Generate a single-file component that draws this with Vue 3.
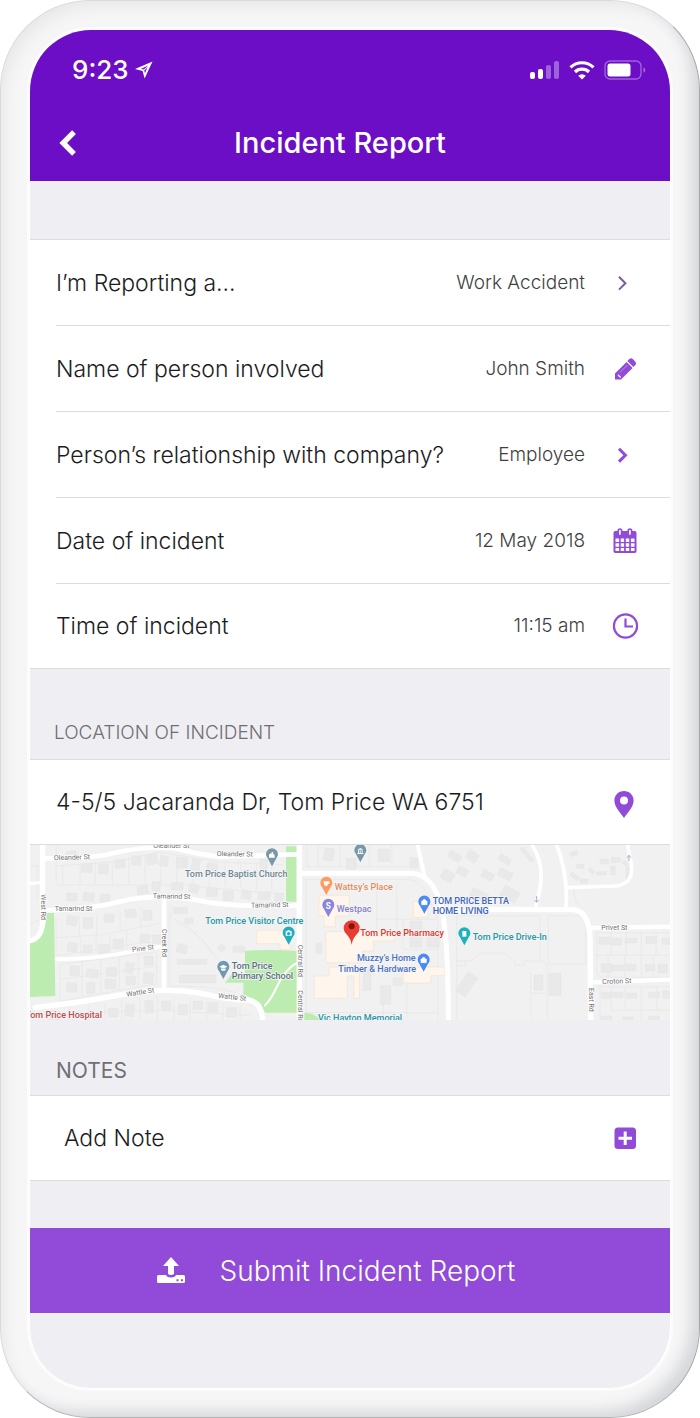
<template>
  <div class="phone">
    <main class="screen">
      <header class="top-bar">
        <div class="status-bar">
          <div class="status-time">
            <span>9:23</span>
            <svg class="location-arrow" viewBox="0 0 18 18" fill="currentColor" fill-rule="evenodd">
              <path d="M17.500.5L0 8l7.600 1.900L9.600 17.500zM13.200 4.600L5.800 7.900l3.200.6 1 3.800z"/>
              <path d="M16 2l.4.400L9.400 9.400 8.600 8.800z"/>
            </svg>
          </div>
          <div class="status-icons">
            <svg class="signal" viewBox="0 0 30 20" fill="currentColor">
              <rect x="0" y="12" width="5" height="7" rx="2"/>
              <rect x="8" y="9" width="5" height="10" rx="2"/>
              <rect x="16" y="5" width="5" height="14" rx="2" opacity="0.35"/>
              <rect x="24" y="1" width="5" height="18" rx="2" opacity="0.35"/>
            </svg>
            <svg class="wifi" viewBox="0 0 26 20" fill="none" stroke="currentColor" stroke-width="3.2">
              <path d="M1.5 7.4a16.5 16.5 0 0 1 23 0"/>
              <path d="M6 12a10 10 0 0 1 14 0"/>
              <path d="M13 19.5l-3.8-3.8a5.4 5.4 0 0 1 7.6 0z" fill="currentColor" stroke="none"/>
            </svg>
            <svg class="battery" viewBox="0 0 42 20" fill="none">
              <rect x="1" y="1" width="36" height="18" rx="5" stroke="currentColor" stroke-opacity="0.35" stroke-width="1.4"/>
              <rect x="3.5" y="3.5" width="23" height="13" rx="2.5" fill="currentColor"/>
              <path d="M39.5 7.5q1.8.8 1.8 2.5t-1.8 2.5z" fill="currentColor" opacity="0.4"/>
            </svg>
          </div>
        </div>
        <div class="nav-bar">
          <button class="back-button" type="button" aria-label="Back">
            <svg viewBox="0 0 18 26" fill="none" stroke="currentColor" stroke-width="5.4">
              <path d="M15 2.2L4.2 13 15 23.8"/>
            </svg>
          </button>
          <h1 class="nav-title">Incident Report</h1>
        </div>
      </header>

      <form class="report" @submit.prevent>
        <section class="group details">
          <div v-for="field in fields" :key="field.id" class="row">
            <div class="row-inner">
              <label class="row-label" :for="field.id">{{ field.label }}</label>
              <select v-if="field.options" :id="field.id" v-model="field.value" class="row-value">
                <option v-for="option in field.options" :key="option">{{ option }}</option>
              </select>
              <input v-else :id="field.id" v-model="field.value" class="row-value" type="text">
              <svg v-if="field.icon === 'chevron'" class="row-icon" :class="{ muted: field.muted }" viewBox="0 0 32 32" fill="none" stroke="currentColor" :stroke-width="field.muted ? 2 : 3">
                <path d="M11 9.800l6.400 6.400-6.400 6.400"/>
              </svg>
              <svg v-else-if="field.icon === 'pencil'" class="row-icon" viewBox="0 0 32 32" fill="currentColor">
                <path d="M7 26.500v-6L18.600 8.900l6 6L13 26.500z"/>
                <path d="M19.400 8.100l2-2q1.700-1.500 3.400 0l2.600 2.600q1.500 1.700 0 3.400l-2 2z"/>
                <path d="M9.800 22l1 .3.400 1 1 .4.300 1" fill="none" stroke="#fff" stroke-width="1.200"/>
                <path d="M12 19.500l7.500-7.500" stroke="#fff" stroke-opacity="0.35" stroke-width="1"/>
              </svg>
              <svg v-else-if="field.icon === 'calendar'" class="row-icon" viewBox="0 0 32 32">
                <rect x="5.500" y="6" width="23" height="22" rx="1.8" fill="currentColor"/>
                <path d="M7.500 13.500h3.600v3.400H7.500zM12.700 13.500h3.400v3.400h-3.400zM17.800 13.500h3.400v3.400h-3.400zM22.900 13.500h3.600v3.400h-3.600zM7.500 18.300h3.600v3.400H7.500zM12.700 18.300h3.400v3.400h-3.400zM17.800 18.300h3.400v3.400h-3.400zM22.900 18.300h3.600v3.400h-3.600zM7.500 23.100h3.600v3H7.500zM12.700 23.100h3.400v3h-3.400zM17.800 23.100h3.400v3h-3.400zM22.900 23.100h3.600v3h-3.600z" fill="#fff"/>
                <rect x="10.200" y="4" width="3.400" height="6.600" rx="1.700" fill="#fff" stroke="currentColor" stroke-width="1.700"/>
                <rect x="20.200" y="4" width="3.400" height="6.600" rx="1.700" fill="#fff" stroke="currentColor" stroke-width="1.700"/>
              </svg>
              <svg v-else class="row-icon" viewBox="0 0 32 32" fill="none" stroke="currentColor" stroke-width="2.2">
                <circle cx="17.500" cy="16" r="11.600"/>
                <path d="M17.500 8.500v8h7.500"/>
              </svg>
            </div>
          </div>
        </section>

        <div class="section-head location-head">
          <label for="address">LOCATION OF INCIDENT</label>
        </div>
        <section class="group">
          <div class="row single">
            <div class="row-inner">
              <input id="address" v-model="address" class="address" type="text">
              <svg class="row-icon" viewBox="0 0 32 32" fill="currentColor" fill-rule="evenodd">
                <path d="M16 5c-5.500 0-9.600 4.200-9.600 9.500C6.400 21 12 26 16 32c4-6 9.600-11 9.600-17.500C25.600 9.200 21.500 5 16 5zM16 10.600a4 4 0 1 1 0 8 4 4 0 0 1 0-8z"/>
              </svg>
            </div>
          </div>
          <svg class="map" viewBox="0 12 1920 525" preserveAspectRatio="xMidYMid slice" role="img" aria-label="Map">
            <rect y="12" width="1920" height="525" fill="#f1f1f1"/>
            <g class="green">
              <path d="M50 215h22l4 250-76 3V300q40-10 48-60z"/>
              <path d="M768 16h32v166h-32z"/>
              <path d="M645 330q60-6 158 0v185h-98l-15-30q-30-15-50-25V425h-55l20-25h40z"/>
              <path d="M823 515q30 0 50 24h-50z"/>
            </g>
            <g class="lots">
              <path v-for="lot in lots" :key="lot" :d="lot"/>
            </g>
            <g class="buildings">
              <path v-for="(b, i) in buildings" :key="i" :d="boxPath(b)"/>
            </g>
            <g class="shops">
              <path d="M680 268h102v58h-32v-18h-70z"/>
              <path d="M868 163h90v62h-42v32h-34v-32h-16z"/>
              <path d="M888 272h206v28h-64v30h-32v35H888z"/>
              <path d="M853 405h45v-27h90v94h-16v-67h-20v67h-99z"/>
              <path d="M1150 182h44v47h-44zM1121 378h124v26h-42v22h-82z"/>
            </g>
            <g class="roads">
              <path d="M38 12v190q8 90-38 97" stroke-width="16"/>
              <path d="M38 52q120 0 190-10 110-30 210-20 60 18 130 25l232-7" stroke-width="14"/>
              <path d="M0 128l32-4" stroke-width="10"/>
              <path d="M44 208q130 0 250-32 110-20 240 8 90 14 276 10" stroke-width="14"/>
              <path d="M402 180v270" stroke-width="14"/>
              <path d="M80 355q120 0 240-26 50-10 82-12" stroke-width="12"/>
              <path d="M15 499q130-12 260-38 130-24 240-4 80 20 140 20 40 6 43 62" stroke-width="16"/>
              <path d="M808 12v526" stroke-width="16"/>
              <path d="M815 97h330q50 5 75 60 35 60 35 380" stroke-width="15"/>
              <path d="M1163 12l22 100" stroke-width="12"/>
              <path d="M1260 214q120-12 260-8h110q45 4 50 80l2 251" stroke-width="16"/>
              <path d="M1506 12q40 60 22 140l-12 52M1580 12q35 90 28 190M1610 140l145-5q60-5 48-70l-10-53" stroke-width="11"/>
              <path d="M1680 261l240-4M1680 424l240-8" stroke-width="13"/>
              <path d="M705 493q20-20 35-55 30-60 62-72" stroke-width="6"/>
            </g>
            <g class="street-names">
              <text v-for="s in streets" :key="s.name + s.x + s.y" :transform="`translate(${s.x} ${s.y}) rotate(${s.turn})`">{{ s.name }}</text>
            </g>
            <g v-for="pin in pins" :key="pin.x" :transform="`translate(${pin.x} ${pin.y})`">
              <path d="M0 34L-13 10a18 18 0 1 1 26 0z" :fill="pin.color"/>
              <path v-if="pin.kind === 'bag'" d="M-8-4H8V7H-8zM-4-4q0-5 4-5t4 5" fill="#fff" stroke="#fff" stroke-width="2"/>
              <path v-else-if="pin.kind === 'cup'" d="M-9-7H9v8H4v4q-4 4-10 0z" fill="#fff"/>
              <path v-else-if="pin.kind === 'school'" d="M0-9l12 6L0 3l-12-6zM-7 2v5q7 5 14 0V2L0 5z" fill="#fff"/>
              <path v-else-if="pin.kind === 'camera'" d="M-9-6h4l2-3h6l2 3h4V7H-9zM0-4a5 5 0 1 0 .1 0" fill="#fff" fill-rule="evenodd"/>
              <path v-else-if="pin.kind === 'church'" d="M-9 8v-9l4-4 3 3v-5l3-3 3 3v4l4 4v7z" fill="#fff"/>
              <path v-else-if="pin.kind === 'civic'" d="M-9-4L0-9l9 5zM-7-2h3v7h-3zM-2-2h3v7h-3zM4-2h3v7H4zM-9 6H9v3H-9z" fill="#fff"/>
              <path v-else-if="pin.kind === 'film'" d="M-6-9H6V8H-6z" fill="#fff"/>
              <text v-else class="dollar" y="9">S</text>
            </g>
            <path d="M965 312q-2-18-14-31a24 24 0 1 1 28 0q-12 13-14 31z" fill="#e53e32"/>
            <circle cx="965" cy="256" r="9" fill="#8c1007"/>
            <path class="arrows" d="M1520 165v18m-6-6l6 7 6-7M1797 60V43m-6 7l6-7 6 7"/>
            <g class="places">
              <text v-for="p in places" :key="p.name" :x="p.x" :y="p.y" :fill="p.color">{{ p.name }}</text>
            </g>
          </svg>
        </section>

        <div class="section-head notes-head">
          <h2>NOTES</h2>
        </div>
        <section class="group">
          <button class="row single note-button" type="button">
            <span>Add Note</span>
            <svg class="row-icon" viewBox="0 0 32 32">
              <rect x="6.500" y="5.500" width="21.500" height="21.500" rx="3.500" fill="currentColor"/>
              <path d="M17.200 9.500v13.500M10.500 16.200h13.500" stroke="#fff" stroke-width="3"/>
            </svg>
          </button>
        </section>

        <button class="submit-button" type="submit">
          <svg viewBox="0 0 28 28" fill="currentColor">
            <path d="M14 0l8 9h-5v8q-3 2-6 0V9H6z"/>
            <path fill-rule="evenodd" d="M1.500 18H9q1 2.500 5 2.500t5-2.500h7.500q1.500 0 1.500 1.500v5q0 1.500-1.500 1.500h-25Q0 26 0 24.500v-5Q0 18 1.500 18zM19.500 22.300v2h2v-2zM24 22.300v2h2v-2z"/>
          </svg>
          <span>Submit Incident Report</span>
        </button>
      </form>
    </main>
  </div>
</template>

<script setup>
import { ref } from 'vue'

const fields = ref([
  { id: 'type', label: 'I’m Reporting a...', value: 'Work Accident', options: ['Work Accident'], icon: 'chevron', muted: true },
  { id: 'person', label: 'Name of person involved', value: 'John Smith', icon: 'pencil' },
  { id: 'relationship', label: 'Person’s relationship with company?', value: 'Employee', options: ['Employee'], icon: 'chevron' },
  { id: 'date', label: 'Date of incident', value: '12 May 2018', icon: 'calendar' },
  { id: 'time', label: 'Time of incident', value: '11:15 am', icon: 'clock' }
])

const address = ref('4-5/5 Jacaranda Dr, Tom Price WA 6751')

const streets = [
  { name: 'Oleander St', x: 72, y: 58, turn: -2 },
  { name: 'Oleander St', x: 370, y: 22, turn: 0 },
  { name: 'Oleander St', x: 560, y: 45, turn: 1 },
  { name: 'Tamarind St', x: 74, y: 211, turn: 0 },
  { name: 'Tamarind St', x: 368, y: 172, turn: 1 },
  { name: 'Tamarind St', x: 663, y: 200, turn: -1 },
  { name: 'Pine St', x: 307, y: 333, turn: -7 },
  { name: 'Wattle St', x: 290, y: 467, turn: -9 },
  { name: 'Wattle St', x: 564, y: 470, turn: 7 },
  { name: 'West Rd', x: 32, y: 160, turn: 90 },
  { name: 'Creek Rd', x: 396, y: 264, turn: 90 },
  { name: 'Central Rd', x: 805, y: 311, turn: 90 },
  { name: 'Central Rd', x: 805, y: 448, turn: 90 },
  { name: 'Privet St', x: 1714, y: 267, turn: 0 },
  { name: 'Croton St', x: 1717, y: 429, turn: -2 },
  { name: 'East Rd', x: 1676, y: 441, turn: 90 }
]

const places = [
  { name: 'Tom Price Baptist Church', x: 465, y: 107, color: '#6f8794' },
  { name: 'Tom Price Visitor Centre', x: 526, y: 250, color: '#2497a5' },
  { name: 'Tom Price', x: 605, y: 383, color: '#56707e' },
  { name: 'Primary School', x: 605, y: 413, color: '#56707e' },
  { name: 'Tom Price Hospital', x: -14, y: 532, color: '#bc4b4f' },
  { name: 'Wattsy’s Place', x: 914, y: 147, color: '#df8d5f' },
  { name: 'Westpac', x: 920, y: 213, color: '#8583c4' },
  { name: 'Tom Price Pharmacy', x: 991, y: 285, color: '#dc352e' },
  { name: 'Muzzy’s Home', x: 981, y: 361, color: '#4a70c4' },
  { name: 'Timber & Hardware', x: 925, y: 392, color: '#4a70c4' },
  { name: 'TOM PRICE BETTA', x: 1208, y: 188, color: '#3e68ba' },
  { name: 'HOME LIVING', x: 1208, y: 218, color: '#3e68ba' },
  { name: 'Tom Price Drive-In', x: 1328, y: 298, color: '#2497a5' },
  { name: 'Vic Hayton Memorial', x: 864, y: 539, color: '#2497a5' }
]

const pins = [
  { x: 726, y: 42, kind: 'church', color: '#7898a8' },
  { x: 991, y: 30, kind: 'civic', color: '#7898a8' },
  { x: 580, y: 380, kind: 'school', color: '#7098b0' },
  { x: 776, y: 277, kind: 'camera', color: '#1fb0c0' },
  { x: 889, y: 128, kind: 'cup', color: '#ff9a5c' },
  { x: 895, y: 194, kind: 'dollar', color: '#8984dd' },
  { x: 1183, y: 184, kind: 'bag', color: '#4b8af5' },
  { x: 1181, y: 358, kind: 'bag', color: '#4b8af5' },
  { x: 1303, y: 279, kind: 'film', color: '#1fb0c0' }
]

// x, y, width, height, rotation
const buildings = [
  [110, 30, 30, 28, -8], [155, 68, 32, 26, 0], [205, 70, 30, 28, 0], [255, 55, 30, 26, -5],
  [305, 45, 28, 28, 5], [350, 40, 32, 30, -12], [390, 45, 24, 30, 8], [440, 50, 32, 30, 0],
  [485, 55, 24, 32, 10], [530, 68, 32, 26, 0], [110, 156, 30, 24, 0], [160, 155, 32, 25, 8],
  [210, 160, 30, 25, 0], [322, 135, 32, 24, -10], [366, 122, 24, 28, 0], [425, 125, 34, 22, 0],
  [478, 130, 28, 25, 12], [530, 140, 32, 26, 0], [580, 150, 30, 28, 0], [635, 148, 28, 26, 8],
  [685, 152, 34, 24, 0], [735, 156, 25, 26, 0], [110, 225, 32, 28, 14], [160, 230, 28, 32, 0],
  [222, 220, 30, 24, 0], [285, 205, 34, 24, -8], [340, 208, 26, 30, 0], [112, 305, 30, 28, 10],
  [160, 312, 26, 24, 0], [205, 310, 32, 26, -8], [250, 295, 30, 28, 0], [330, 280, 30, 24, 6],
  [368, 282, 24, 26, 0], [120, 375, 28, 28, 0], [170, 385, 34, 24, 6], [230, 380, 30, 26, 0],
  [285, 365, 26, 32, 12], [342, 345, 28, 28, 0], [110, 425, 30, 28, 0], [170, 425, 24, 32, 0],
  [225, 415, 32, 28, 0], [288, 405, 28, 26, 0], [340, 395, 30, 32, 8], [432, 200, 40, 18, 0],
  [465, 232, 24, 16, 0], [440, 310, 32, 26, 12], [442, 355, 88, 15, 0], [448, 402, 110, 24, 0],
  [566, 312, 18, 18, 45], [610, 316, 35, 18, 0], [60, 510, 28, 26, 0], [235, 502, 28, 26, 0],
  [285, 490, 28, 36, 8], [345, 478, 25, 38, -6], [395, 480, 28, 28, 0], [445, 490, 28, 32, 4],
  [490, 480, 28, 25, 0], [535, 485, 28, 28, 0], [590, 500, 30, 28, 0], [690, 55, 22, 28, 0],
  [882, 22, 30, 36, 8], [950, 52, 28, 32, 0], [1045, 25, 34, 36, 0], [1140, 50, 24, 30, 0],
  [1255, 35, 38, 22, 30], [1235, 90, 36, 30, 30], [1310, 32, 34, 28, 35], [1280, 80, 34, 24, 25],
  [1405, 45, 38, 20, 30], [1355, 92, 36, 22, 25], [1405, 88, 42, 24, 25], [1322, 148, 50, 28, 25],
  [1415, 142, 50, 35, 30], [1485, 15, 12, 52, -40], [1620, 32, 24, 12, -15], [1640, 70, 22, 12, 0],
  [1675, 84, 20, 12, 45], [1710, 54, 25, 14, 0], [1744, 50, 26, 14, 0], [1700, 92, 28, 10, 0],
  [1742, 75, 14, 26, 0], [1620, 100, 28, 12, 40], [1650, 114, 24, 12, 0], [1776, 62, 20, 12, 45],
  [1788, 80, 12, 34, 0], [1140, 240, 35, 24, 0], [1140, 280, 35, 38, 0], [1192, 278, 36, 18, 0],
  [1190, 300, 38, 18, 0], [858, 307, 18, 30, 0], [1000, 380, 22, 68, 0], [1052, 434, 30, 56, 0],
  [1090, 410, 26, 24, 0], [1292, 396, 36, 68, 35], [1512, 402, 26, 46, 0], [1557, 397, 36, 66, 0],
  [1706, 288, 34, 22, 0], [1746, 292, 28, 20, 0], [1785, 292, 36, 14, 0], [1848, 287, 32, 20, 0],
  [1896, 292, 24, 18, 0], [1714, 368, 32, 26, 0], [1748, 372, 28, 18, 0], [1780, 370, 38, 20, 0],
  [1846, 370, 28, 20, 0], [1884, 370, 28, 26, 0], [1715, 454, 28, 18, 0], [1748, 454, 30, 16, 0],
  [1790, 456, 30, 16, 0], [1856, 454, 32, 16, 0], [1898, 450, 22, 22, 0], [1714, 525, 32, 14, 0],
  [1778, 528, 32, 12, 0], [1856, 525, 32, 14, 0]
]

const lots = [
  'M78 12v110q0 10 10 10h360l110 10 205 18M78 75l170-12 140-30 180 30 190 8',
  'M98 70v60M150 68v62M196 65v66M247 58v74M296 48v82M345 42v94M392 38v94M440 42v90M490 50v88M538 60v76M585 66v70M632 68v74M680 70v78M725 70v82',
  'M78 230v105q0 8 10 8l230-35 70-5M80 290l130-8 180-35M148 225v62M200 220v62M270 208v60M332 200v55M152 292v48M198 288v48M240 280v55M290 270v55',
  'M90 370v110l290-52v-95L90 370M156 365v100M212 360v98M268 350v98M325 340v95M90 415l290-40',
  'M418 190v245q140 0 200 20M430 190l-8 40q70 25 120 100l50 55M440 245q70 30 110 95',
  'M60 512v26M118 503v35M175 492v46M225 488v50M275 478v60M330 470v68M382 466v72M432 468v70M480 472v66M530 480v58M578 488v50M630 495v43M0 520l390-12 270 15',
  'M830 12v65h310M865 12v65M930 12v65M1018 12v65M1085 12v65M828 115h310q45 10 60 60l25 60v300M828 115v400h390M1040 115v150M1100 130v135M1040 235h180M1120 235v90h105M1060 450v88M1130 430v100',
  'M1280 224h250v130M1280 224v310M1280 360h26v14h-26M1306 360h16l30-24h72l30 24v12h28v-12h58l12 20v155M1502 395v140M1502 457h48M1555 224v146h112V224z',
  'M1628 140l12 48M1700 275h220M1700 275v110q0 24 20 24h200M1700 343h220M1744 275v68M1788 275v68M1834 275v134M1878 275v68M1734 343v66M1784 343v66M1870 343v66M1700 437h220M1710 437v100M1744 437v70h176M1785 437v70M1834 437v100M1880 437v70',
  'M0 75h28M22 75v100M0 250l28-15'
]

const boxPath = ([x, y, w, h, turn]) => {
  const a = (turn * Math.PI) / 180
  const corners = [[-w, -h], [w, -h], [w, h], [-w, h]].map(([dx, dy]) => [
    Math.round(x + w / 2 + (dx * Math.cos(a) - dy * Math.sin(a)) / 2),
    Math.round(y + h / 2 + (dx * Math.sin(a) + dy * Math.cos(a)) / 2)
  ])
  return `M${corners.join('L')}z`
}
</script>

<style>
body {
  margin: 0;
  background: #fff;
}
</style>

<style scoped>
.phone {
  box-sizing: border-box;
  display: flex;
  min-height: 100vh;
  padding: 28px;
  border: 1px solid #d9d9db;
  border-right-color: #a5a6a8;
  border-bottom-color: #b4b5b7;
  border-radius: 90px;
  background: #f6f6f7;
  box-shadow:
    inset -12px -10px 14px -4px #d6d7da,
    inset 8px 10px 14px -4px #e9e9ea;
  font-family: Inter, "Liberation Sans", sans-serif;
  color: #1c1c1e;
}

.screen {
  flex: 1;
  min-width: 0;
  display: flex;
  flex-direction: column;
  border: 1px solid #fff;
  border-radius: 62px;
  background: #efeef3;
  box-shadow: 0 0 0 2px #fcfcfd;
  overflow: hidden;
}

button,
input,
select {
  font: inherit;
  color: inherit;
  border: none;
  padding: 0;
  margin: 0;
  border-radius: 0;
  background: none;
}

button {
  cursor: pointer;
}

.top-bar {
  background: #6b0ec6;
  color: #fff;
}

.status-bar {
  display: flex;
  justify-content: space-between;
  align-items: center;
  padding: 24px 24px 0 42px;
  height: 32px;
}

.status-time {
  display: flex;
  align-items: center;
  gap: 6px;
  font-size: 26px;
  line-height: 32px;
  font-weight: 500;
}

.location-arrow {
  width: 18px;
  height: 18px;
}

.status-icons {
  display: flex;
  align-items: center;
  gap: 9px;
}

.signal {
  width: 30px;
  height: 20px;
}

.wifi {
  width: 26px;
  height: 20px;
}

.battery {
  width: 42px;
  height: 20px;
}

.nav-bar {
  display: flex;
  align-items: center;
  height: 76px;
  padding: 19px 67px 0 29px;
}

.back-button {
  width: 18px;
  height: 26px;
}

.back-button svg {
  display: block;
  width: 100%;
}

.nav-title {
  flex: 1;
  margin: 0;
  text-align: center;
  font-size: 29px;
  line-height: 36px;
  font-weight: 500;
}

.report {
  display: flex;
  flex-direction: column;
}

.group {
  border-top: 1px solid #dcdbe0;
  background: #fff;
}

.details {
  margin-top: 58px;
}

.row {
  box-sizing: border-box;
  height: 86px;
  padding-left: 26px;
}

.row-inner {
  box-sizing: border-box;
  display: flex;
  align-items: center;
  height: 100%;
  padding-right: 30px;
  border-bottom: 1px solid #dcdbe0;
}

.row.single,
.row:last-child {
  height: 85px;
  border-bottom: 1px solid #dcdbe0;
}

.row.single .row-inner,
.row:last-child .row-inner {
  border-bottom: none;
}

.row-label,
.address {
  font-size: 23px;
  line-height: 32px;
  font-weight: 300;
}

.row-label {
  flex-shrink: 0;
}

.row-value {
  flex: 1;
  min-width: 0;
  width: 0;
  margin-right: 23px;
  font-size: 19px;
  line-height: 32px;
  font-weight: 300;
  color: #3f3f42;
  text-align: right;
  text-align-last: right;
  appearance: none;
}

.row-icon {
  flex-shrink: 0;
  width: 32px;
  height: 32px;
  color: #914bd8;
}

.row-icon.muted {
  color: #7b5aa6;
}

.address {
  flex: 1;
  min-width: 0;
}

.map {
  display: block;
  width: 100%;
}

.green {
  fill: #bdecb0;
}

.buildings {
  fill: #e9e9e9;
  stroke: #e1e1e1;
  stroke-width: 1;
}

.lots {
  fill: none;
  stroke: #e6e6e6;
  stroke-width: 2;
}

.shops {
  fill: #fef6ec;
  stroke: #f6e2c8;
  stroke-width: 2;
}

.roads {
  fill: none;
  stroke: #fff;
  stroke-linecap: round;
}

.street-names {
  font-family: Roboto, sans-serif;
  font-size: 21px;
  fill: #6f6f6f;
  stroke: #fff;
  stroke-width: 4px;
  paint-order: stroke;
}

.places {
  font-family: Roboto, sans-serif;
  font-size: 27px;
  font-weight: 500;
  stroke: #f6f6f6;
  stroke-width: 4px;
  paint-order: stroke;
}

.dollar {
  font-family: Roboto, sans-serif;
  font-size: 25px;
  font-weight: 700;
  fill: #fff;
  text-anchor: middle;
}

.arrows {
  fill: none;
  stroke: #a9abcf;
  stroke-width: 3;
}

.section-head {
  box-sizing: border-box;
  display: flex;
  align-items: flex-end;
  padding: 0 24px 12px;
  line-height: 28px;
  color: #6f6f74;
}

.section-head h2 {
  margin: 0;
  font: inherit;
}

.location-head {
  height: 90px;
  font-size: 19px;
  font-weight: 300;
}

.notes-head {
  height: 75px;
  padding-left: 26px;
  padding-bottom: 10px;
  font-size: 21px;
}

.note-button {
  display: flex;
  align-items: center;
  justify-content: space-between;
  width: 100%;
  padding: 0 30px 0 34px;
  font-size: 23px;
  line-height: 32px;
  font-weight: 300;
}

.submit-button {
  display: flex;
  align-items: center;
  justify-content: center;
  gap: 35px;
  height: 85px;
  margin-top: 47px;
  padding-right: 28px;
  background: #914bd8;
  color: #fff;
  font-size: 28px;
  line-height: 36px;
  font-weight: 300;
}

.submit-button svg {
  width: 28px;
  height: 28px;
}
</style>
